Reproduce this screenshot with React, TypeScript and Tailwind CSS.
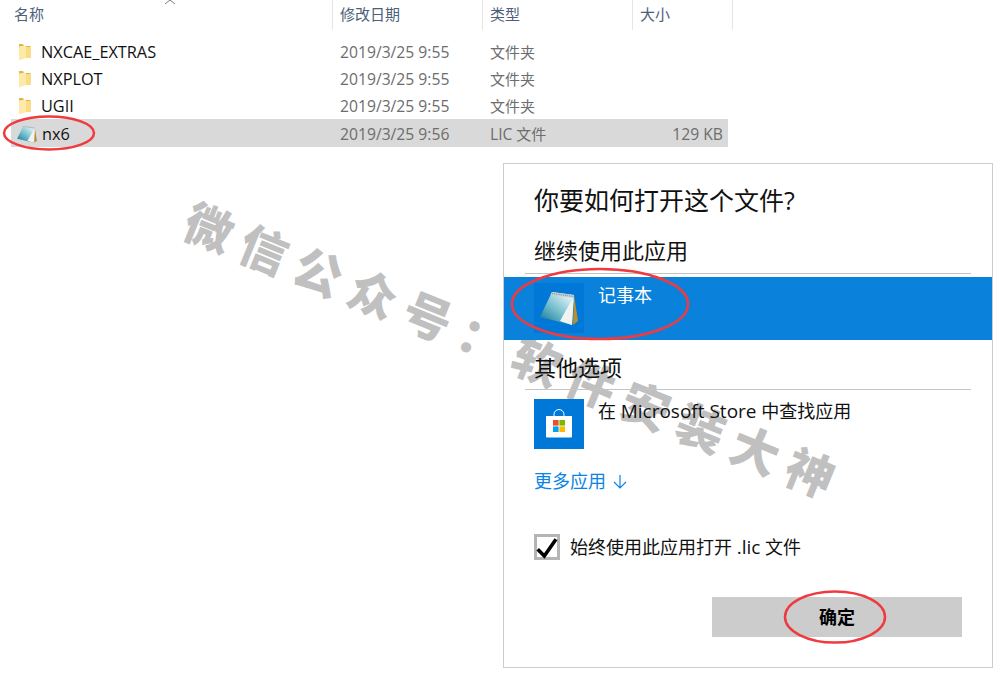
const FolderIcon = () => (
  <svg width="14" height="18" viewBox="0 0 14 18" className="ml-[7px] shrink-0">
    <path d="M1 1h4l1 2h6.5v12H1z" fill="#e3b649" />
    <path d="M1 3.5 8 2.5V15l-7 2.5z" fill="#fde9a8" />
    <path d="M8 4h4.5v11H8z" fill="#fcdc80" />
  </svg>
)

const NotepadIcon = ({ size }: { size: number }) => (
  <svg width={size} height={size} viewBox="0 0 50 50" className="shrink-0">
    <defs>
      <linearGradient id="padFace" x1="0.1" y1="0.9" x2="0.75" y2="0.1">
        <stop offset="0" stopColor="#1f7f9c" />
        <stop offset="0.45" stopColor="#6db9c9" />
        <stop offset="1" stopColor="#d5eef2" />
      </linearGradient>
    </defs>
    <path d="M40 12 44 38 39 42z" fill="#b98f2e" />
    <path d="M18 9 40 12 38 42 6 34z" fill="url(#padFace)" />
    <path d="M38 42 26 38 36 20 39.5 16z" fill="#f1f3f3" />
    <path d="M18 9 40 12 39.8 15 16.5 11.5z" fill="#c6ced2" />
    <path d="M18 10.5 40 13.5" stroke="#7a8890" strokeWidth="1" strokeDasharray="1 1.2" fill="none" />
  </svg>
)

const StoreIcon = () => (
  <div className="w-[50px] h-[50px] bg-[#0078d7] flex items-center justify-center shrink-0">
    <svg width="30" height="30" viewBox="0 0 30 30">
      <path d="M10 8V5.5a5 5 0 0 1 10 0V8" fill="none" stroke="#fff" strokeWidth="1" />
      <path d="M2 7h26v20.5a1 1 0 0 1-1 1H3a1 1 0 0 1-1-1z" fill="#fff" />
      <rect x="9" y="11" width="5.6" height="5.6" fill="#e8502c" />
      <rect x="15.4" y="11" width="5.6" height="5.6" fill="#7db700" />
      <rect x="9" y="17.4" width="5.6" height="5.6" fill="#00a4ef" />
      <rect x="15.4" y="17.4" width="5.6" height="5.6" fill="#ffb900" />
    </svg>
  </div>
)

const files = [
  { name: 'NXCAE_EXTRAS', date: '2019/3/25 9:55', type: '文件夹', size: '' },
  { name: 'NXPLOT', date: '2019/3/25 9:55', type: '文件夹', size: '' },
  { name: 'UGII', date: '2019/3/25 9:55', type: '文件夹', size: '' },
]

const App = () => {
  return (
    <div className="relative w-[1002px] h-[674px] overflow-hidden bg-white font-['Open_Sans','Noto_Sans_CJK_SC',sans-serif]">
      {/* file list */}
      <div className="grid grid-cols-[333px_150px_150px_100px] w-[733px] h-[30px] text-[15px] text-[#4c607a]">
        <div className="border-r border-[#e5e5e5] pl-[14px] leading-[29px]">名称</div>
        <div className="border-r border-[#e5e5e5] pl-[7px] leading-[29px]">修改日期</div>
        <div className="border-r border-[#e5e5e5] pl-[7px] leading-[29px]">类型</div>
        <div className="border-r border-[#e5e5e5] pl-[7px] leading-[29px]">大小</div>
      </div>
      <svg width="12" height="5" viewBox="0 0 12 5" className="absolute left-[164px] top-0">
        <path d="M1 4 6 0l5 4" fill="none" stroke="#7a7a7a" strokeWidth="1" />
      </svg>
      <div className="mt-[8px] ml-[11px] w-[717px] text-[15px] text-[#6d6d6d]">
        {files.map((f) => (
          <div key={f.name} className="grid grid-cols-[329px_150px_150px_88px] h-[27px] pt-[2px] items-center">
            <div className="flex items-center gap-[9px] mb-[2px] text-[16.3px] text-[#111]">
              <FolderIcon />
              <span>{f.name}</span>
            </div>
            <div className="text-[15.7px]">{f.date}</div>
            <div className="mb-[2px]">{f.type}</div>
            <div />
          </div>
        ))}
        <div className="grid grid-cols-[329px_150px_150px_88px] h-[28px] pt-[2px] items-center bg-[#d9d9d9]">
          <div className="flex items-center gap-[7px] pl-[3px] mb-[2px] text-[16.3px] text-[#111]">
            <NotepadIcon size={26} />
            <span className="-ml-[5px]">nx6</span>
          </div>
          <div className="text-[15.7px]">2019/3/25 9:56</div>
          <div><span className="text-[15.7px]">LIC</span> 文件</div>
          <div className="text-right pr-[5px] text-[15.7px]">129 KB</div>
        </div>
      </div>

      {/* watermark */}
      <div className="absolute left-[188px] top-[171px] origin-left rotate-[22.2deg] whitespace-nowrap text-[48px] leading-[90px] font-black tracking-[11px] text-[#c0c0c0] font-['Noto_Sans_CJK_SC',sans-serif]">
        微信公众号：软件安装大神
      </div>

      {/* open with dialog */}
      <div className="relative ml-[503px] mt-[16px] w-[490px] h-[505px] border border-[#cccccc] flex flex-col text-black">
        <div className="pl-[30px] pt-[18px] text-[25px] leading-[36px] text-[#111]">你要如何打开这个文件?</div>
        <div className="pl-[30px] mt-[16px] text-[22px] leading-[32px] text-[#111]">继续使用此应用</div>
        <div className="ml-[21px] mr-[21px] mt-[7px] h-px bg-[#c4c4c4]" />
        <div className="mt-[3px] h-[63px] bg-[#0a82dc] flex items-start pl-[30px] pt-[6px] gap-[14px] text-white">
          <div className="w-[50px] h-[50px] bg-[#0078d7] shrink-0">
            <NotepadIcon size={50} />
          </div>
          <div className="text-[18px] leading-[24px]">记事本</div>
        </div>
        <div className="pl-[30px] mt-[11px] text-[22px] leading-[32px] text-[#111]">其他选项</div>
        <div className="ml-[21px] mr-[21px] mt-[6px] h-px bg-[#c4c4c4]" />
        <div className="mt-[9px] pl-[30px] flex items-start gap-[14px]">
          <StoreIcon />
          <div className="text-[18px] leading-[24px] text-[#111]">在 <span className="text-[19px]">Microsoft Store</span> 中查找应用</div>
        </div>
        <div className="pl-[30px] mt-[19px] flex items-center gap-[6px] text-[18px] leading-[26px] text-[#0a84e6]">
          <span>更多应用</span>
          <svg width="16" height="15" viewBox="0 0 16 15">
            <path d="M8 1v13M2 8l6 6 6-6" fill="none" stroke="#0a84e6" strokeWidth="1.2" />
          </svg>
        </div>
        <div className="pl-[30px] mt-[40px] flex items-center gap-[10px]">
          <div className="w-[26px] h-[26px] border-[3px] border-[#b5b5b5] relative">
            <svg width="26" height="26" viewBox="0 0 26 26" className="absolute -left-[3px] -top-[3px]">
              <path d="M3.7 15.3 10.3 22 22 5.3" fill="none" stroke="#000" strokeWidth="3.6" />
            </svg>
          </div>
          <span className="text-[18px] leading-[26px] text-[#111]">始终使用此应用打开 <span className="text-[19px]">.lic</span> 文件</span>
        </div>
        <div className="ml-[208px] mt-[37px] w-[250px] h-[40px] bg-[#cccccc] flex items-center justify-center text-[18px] font-bold">
          确定
        </div>
      </div>

      {/* red hand-drawn circles */}
      <svg width="96" height="38" viewBox="0 0 96 38" className="absolute left-[2px] top-[114px]">
        <ellipse cx="47" cy="19" rx="45" ry="16.5" fill="none" stroke="#ef3b40" strokeWidth="2.5" />
      </svg>
      <svg width="182" height="76" viewBox="0 0 182 76" className="absolute left-[509px] top-[266px]">
        <ellipse cx="91" cy="38" rx="88" ry="35" fill="none" stroke="#ef3b40" strokeWidth="2.5" />
      </svg>
      <svg width="106" height="56" viewBox="0 0 106 56" className="absolute left-[782px] top-[589px]">
        <ellipse cx="53" cy="28" rx="50" ry="25.5" fill="none" stroke="#ef3b40" strokeWidth="2.5" />
      </svg>
    </div>
  )
}

export default App
